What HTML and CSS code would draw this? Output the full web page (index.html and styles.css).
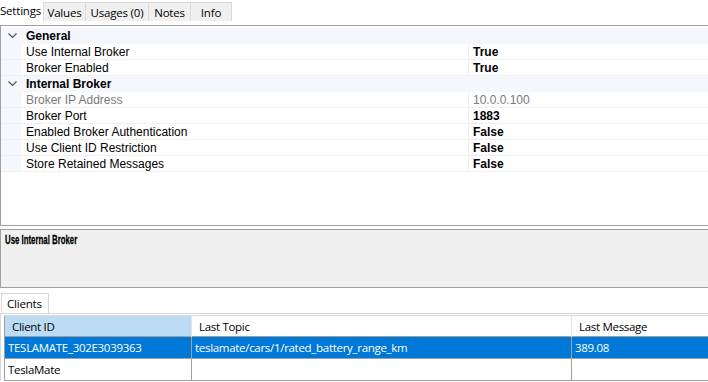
FILE: index.html
```html
<!DOCTYPE html>
<html lang="en">
<head>
  <meta charset="UTF-8" />
  <title>Broker Settings</title>
  <link rel="stylesheet" href="styles.css">
</head>
<body>

<!-- Top tabs -->
<div class="tabs">
  <div class="tab active">Settings</div>
  <div class="tab">Values</div>
  <div class="tab">Usages (0)</div>
  <div class="tab">Notes</div>
  <div class="tab">Info</div>
</div>

<!-- Property grid -->
<div class="props">
  <div class="row cat">
    <span class="gut"><svg width="9" height="6" viewBox="0 0 9 6"><path d="M0.5 0.5 L4.5 4.5 L8.5 0.5" fill="none" stroke="#555" stroke-width="1.2"/></svg></span>
    <span class="name">General</span>
  </div>
  <div class="row"><span class="gut"></span><span class="name">Use Internal Broker</span><span class="val">True</span></div>
  <div class="row"><span class="gut"></span><span class="name">Broker Enabled</span><span class="val">True</span></div>
  <div class="row cat">
    <span class="gut"><svg width="9" height="6" viewBox="0 0 9 6"><path d="M0.5 0.5 L4.5 4.5 L8.5 0.5" fill="none" stroke="#555" stroke-width="1.2"/></svg></span>
    <span class="name">Internal Broker</span>
  </div>
  <div class="row dim"><span class="gut"></span><span class="name">Broker IP Address</span><span class="val">10.0.0.100</span></div>
  <div class="row"><span class="gut"></span><span class="name">Broker Port</span><span class="val">1883</span></div>
  <div class="row"><span class="gut"></span><span class="name">Enabled Broker Authentication</span><span class="val">False</span></div>
  <div class="row"><span class="gut"></span><span class="name">Use Client ID Restriction</span><span class="val">False</span></div>
  <div class="row"><span class="gut"></span><span class="name">Store Retained Messages</span><span class="val">False</span></div>
</div>

<!-- Description panel -->
<div class="desc">
  <div class="desc-title">Use Internal Broker</div>
</div>

<!-- Clients -->
<div class="clients">
  <div class="tabs small">
    <div class="tab active">Clients</div>
  </div>
  <div class="table-wrap">
    <table class="grid">
      <tr class="head">
        <th class="c1 sel">Client ID</th>
        <th class="c2">Last Topic</th>
        <th class="c3">Last Message</th>
      </tr>
      <tr class="picked">
        <td>TESLAMATE_302E3039363</td>
        <td>teslamate/cars/1/rated_battery_range_km</td>
        <td>389.08</td>
      </tr>
      <tr>
        <td>TeslaMate</td>
        <td></td>
        <td></td>
      </tr>
    </table>
  </div>
</div>

</body>
</html>
```

FILE: styles.css
```css
* {
  margin: 0;
  padding: 0;
  box-sizing: border-box;
}

body {
  width: 708px;
  height: 382px;
  overflow: hidden;
  background: #fff;
  font-family: "Liberation Sans", Arial, sans-serif;
  font-size: 12px;
  color: #000;
}

/* tabs */
.tabs {
  display: flex;
  height: 25px;
  align-items: flex-start;
}

.tab {
  height: 19px;
  margin-top: 2px;
  padding-top: 2px;
  background: #f0f0f0;
  border: 1px solid #d9d9d9;
  border-bottom: none;
  margin-left: -1px;
  font-family: "Open Sans", sans-serif;
  font-size: 11.5px;
  line-height: 15px;
  letter-spacing: -0.2px;
  text-align: center;
}

.tabs .tab:nth-child(2) { width: 43px; }
.tabs .tab:nth-child(3) { width: 64px; }
.tabs .tab:nth-child(4) { width: 43px; }
.tabs .tab:nth-child(5) { width: 42px; }

.tab.active {
  background: #fff;
  margin-top: 0;
  height: 22px;
  border-color: #fff;
  width: 45px;
  text-align: left;
  padding-left: 0;
  margin-left: -1px;
}

/* property grid */
.props {
  height: 201px;
  border-top: 1px solid #a0a0a0;
  border-left: 1px solid #a0a0a0;
  border-bottom: 1px solid #a0a0a0;
  padding-top: 2px;
}

.row {
  display: flex;
  height: 16px;
  line-height: 17px;
  border-bottom: 1px solid #f0f0f0;
}

.gut {
  width: 20px;
  flex: none;
  background: #f4f7fc;
  display: flex;
  align-items: center;
  justify-content: center;
}

.gut svg {
  margin-left: 2px;
}

.name {
  width: 448px;
  flex: none;
  padding-left: 5px;
  color: #000;
  border-right: 1px solid #f0f0f0;
}

.val {
  padding-left: 4px;
  font-weight: bold;
}

.row.cat {
  background: #f4f7fc;
  border-bottom-color: #f4f7fc;
}

.row.cat .name {
  font-weight: bold;
  border-right: none;
}

.row.dim .name,
.row.dim .val {
  color: #7a7a7a;
}

.row.dim .val {
  font-weight: normal;
}

/* description */
.desc {
  margin-top: 3px;
  height: 59px;
  background: #f0f0f0;
  border-top: 1px solid #a0a0a0;
  border-left: 1px solid #a0a0a0;
  border-bottom: 1px solid #a0a0a0;
  padding: 2px 4px;
}

.desc-title {
  font-family: "Liberation Sans", Arial, sans-serif;
  font-weight: bold;
  font-size: 13.5px;
  line-height: 16px;
  transform: scaleX(0.58);
  transform-origin: left;
  white-space: nowrap;
  -webkit-text-stroke: 0.3px #000;
}

/* clients */
.clients {
  padding-top: 5px;
}

.tabs.small {
  height: 20px;
  padding-left: 2px;
}

.tabs.small .tab.active {
  border: 1px solid #d9d9d9;
  border-bottom: none;
  height: 20px;
  width: auto;
  margin-top: 0;
  padding: 2px 6px 0 5px;
}

.table-wrap {
  border-top: 1px solid #d9d9d9;
  border-left: 1px solid #d9d9d9;
  padding: 1px 0 0 3px;
}

.grid {
  border-collapse: collapse;
  width: 720px;
  font-family: "Open Sans", sans-serif;
  font-size: 11.5px;
  letter-spacing: -0.3px;
}

.grid th,
.grid td {
  text-align: left;
  font-weight: normal;
  white-space: nowrap;
}

.grid th {
  height: 21px;
  padding: 0 7px;
  border-right: 1px solid #e5e5e5;
  border-top: 1px solid #d9d9d9;
  border-left: 1px solid #a0a0a0;
}

.grid th.sel {
  background: #bcdcf4;
}

.grid th.c1 { width: 187px; }
.grid th.c2 { width: 380px; }

.grid td {
  height: 22px;
  padding: 0 3px;
  border: 1px solid #a0a0a0;
}

.grid tr.picked td {
  background: #0078d7;
  color: #fff;
}
```
